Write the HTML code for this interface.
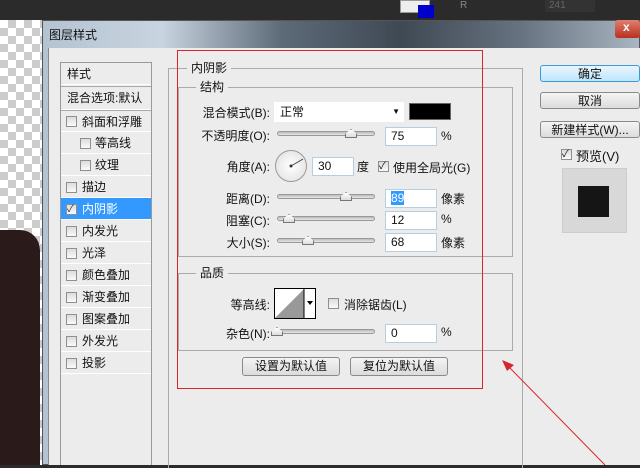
<!DOCTYPE html>
<html><head><meta charset="utf-8"><style>
*{margin:0;padding:0;box-sizing:border-box}
body{width:640px;height:465px;overflow:hidden;position:relative;background:#2b2b2b;font-family:"Liberation Sans","Noto Sans CJK SC",sans-serif;font-size:12px;color:#111}
.a{position:absolute}
.chk{background-color:#fff;background-image:linear-gradient(45deg,#ccc 25%,transparent 25%,transparent 75%,#ccc 75%),linear-gradient(45deg,#ccc 25%,transparent 25%,transparent 75%,#ccc 75%);background-size:16px 16px;background-position:0 0,8px 8px}
.cb{position:absolute;width:11px;height:11px;border:1px solid #8e8f8f;background:linear-gradient(#dcdcdc,#fafafa)}
.row{position:absolute;left:61px;width:90px;height:22px;border-bottom:1px solid #fff;line-height:22px}
.sl{position:absolute;height:5px;border:1px solid #999;border-radius:3px;background:linear-gradient(#bbb,#e6e6e6)}
.th{position:absolute;width:12px;height:9px;background:linear-gradient(#fff,#ddd);border:1px solid #777;clip-path:polygon(50% 0,100% 55%,100% 100%,0 100%,0 55%)}
.tb{position:absolute;width:52px;height:19px;background:#fff;border:1px solid #b5cfe0;line-height:17px;padding-left:5px}
.btn{position:absolute;border:1px solid #8a8a8a;border-radius:3px;background:linear-gradient(#f4f4f4,#dcdcdc);text-align:center;line-height:16px}
.lbl{position:absolute;text-align:right;width:100px}
</style></head><body>
<div class="a chk" style="left:0;top:20px;width:42px;height:445px"></div>
<div class="a" style="left:0;top:230px;width:40px;height:235px;background:#2a1a1a;border-radius:0 20px 0 0"></div>
<div class="a" style="left:400px;top:0;width:30px;height:13px;background:#eee;border:1px solid #999"></div>
<div class="a" style="left:418px;top:5px;width:16px;height:13px;background:#0000cc"></div>
<div class="a" style="left:460px;top:0;color:#888;font-size:10px">R</div>
<div class="a" style="left:545px;top:0;width:50px;height:12px;background:#333;color:#666;font-size:10px;padding-left:4px">241</div>
<div class="a" style="left:42px;top:20px;width:598px;height:445px;background:linear-gradient(90deg,#b4c3d2,#c8d4df 20%,#5d6a78 40%,#3f4954 60%,#66727f 80%,#a9b5c1);border:1px solid #555"></div>
<div class="a" style="left:49px;top:26px;font-size:12px">图层样式</div>
<div class="a" style="left:615px;top:20px;width:25px;height:18px;background:linear-gradient(#e08070,#b83020);border-radius:3px;color:#fff;font-weight:bold;padding-left:8px">x</div>
<div class="a" style="left:48px;top:48px;width:592px;height:417px;background:#ececec;border-left:1px solid #888"></div>
<div class="a" style="left:60px;top:62px;width:92px;height:403px;border:1px solid #999;border-bottom:none"></div>
<div class="row" style="top:63px;padding-left:6px">样式</div>
<div class="row" style="top:86px;padding-left:6px;border-top:1px solid #aaa;height:24px">混合选项:默认</div>
<div class="row" style="top:110px;padding-left:21px;border-top:1px solid #aaa">斜面和浮雕</div><div class="cb" style="left:66px;top:116px"></div>
<div class="row" style="top:132px;padding-left:34px">等高线</div><div class="cb" style="left:80px;top:138px"></div>
<div class="row" style="top:154px;padding-left:34px">纹理</div><div class="cb" style="left:80px;top:160px"></div>
<div class="row" style="top:176px;padding-left:21px">描边</div><div class="cb" style="left:66px;top:182px"></div>
<div class="row" style="top:198px;padding-left:21px;background:#3399ff;color:#fff">内阴影</div><div class="cb" style="left:66px;top:204px;font-size:10px;line-height:9px;color:#234">✓</div>
<div class="row" style="top:220px;padding-left:21px">内发光</div><div class="cb" style="left:66px;top:226px"></div>
<div class="row" style="top:242px;padding-left:21px">光泽</div><div class="cb" style="left:66px;top:248px"></div>
<div class="row" style="top:264px;padding-left:21px">颜色叠加</div><div class="cb" style="left:66px;top:270px"></div>
<div class="row" style="top:286px;padding-left:21px">渐变叠加</div><div class="cb" style="left:66px;top:292px"></div>
<div class="row" style="top:308px;padding-left:21px">图案叠加</div><div class="cb" style="left:66px;top:314px"></div>
<div class="row" style="top:330px;padding-left:21px">外发光</div><div class="cb" style="left:66px;top:336px"></div>
<div class="row" style="top:352px;padding-left:21px">投影</div><div class="cb" style="left:66px;top:358px"></div>
<div class="a" style="left:168px;top:68px;width:355px;height:400px;border:1px solid #aaa;border-bottom:none"></div>
<div class="a" style="left:187px;top:59px;background:#ececec;padding:0 4px">内阴影</div>
<div class="a" style="left:178px;top:87px;width:335px;height:170px;border:1px solid #aaa"></div>
<div class="a" style="left:196px;top:78px;background:#ececec;padding:0 4px">结构</div>
<div class="a" style="left:178px;top:273px;width:335px;height:78px;border:1px solid #aaa"></div>
<div class="a" style="left:196px;top:264px;background:#ececec;padding:0 4px">品质</div>
<div class="lbl" style="left:170px;top:104px">混合模式(B):</div>
<div class="a" style="left:274px;top:102px;width:130px;height:20px;background:#fff;padding-left:6px;line-height:20px">正常<span style="position:absolute;right:4px;font-size:8px">▼</span></div>
<div class="a" style="left:409px;top:103px;width:42px;height:17px;background:#000;border:1px solid #666"></div>
<div class="lbl" style="left:170px;top:127px">不透明度(O):</div>
<div class="sl" style="left:277px;top:131px;width:98px"></div><div class="th" style="left:345px;top:129px"></div>
<div class="tb" style="left:385px;top:127px">75</div><div class="a" style="left:441px;top:129px">%</div>
<div class="lbl" style="left:170px;top:158px">角度(A):</div>
<div class="a" style="left:275px;top:150px;width:32px;height:32px;border:1px solid #999;border-radius:50%;background:radial-gradient(#fff,#ddd)"></div>
<svg class="a" style="left:275px;top:150px" width="32" height="32"><line x1="16" y1="16" x2="28" y2="9" stroke="#444"/><circle cx="16" cy="16" r="1.5" fill="#333"/></svg>
<div class="tb" style="left:312px;top:157px;width:42px">30</div><div class="a" style="left:357px;top:158px">度</div>
<div class="cb" style="left:378px;top:161px;font-size:10px;line-height:9px">✓</div><div class="a" style="left:393px;top:159px">使用全局光(G)</div>
<div class="lbl" style="left:170px;top:190px">距离(D):</div>
<div class="sl" style="left:277px;top:194px;width:98px"></div><div class="th" style="left:340px;top:192px"></div>
<div class="tb" style="left:385px;top:189px"><span style="background:#3399ff;color:#fff">89</span></div><div class="a" style="left:441px;top:190px">像素</div>
<div class="lbl" style="left:170px;top:212px">阻塞(C):</div>
<div class="sl" style="left:277px;top:216px;width:98px"></div><div class="th" style="left:283px;top:214px"></div>
<div class="tb" style="left:385px;top:211px">12</div><div class="a" style="left:441px;top:212px">%</div>
<div class="lbl" style="left:170px;top:234px">大小(S):</div>
<div class="sl" style="left:277px;top:238px;width:98px"></div><div class="th" style="left:302px;top:236px"></div>
<div class="tb" style="left:385px;top:233px">68</div><div class="a" style="left:441px;top:234px">像素</div>
<div class="lbl" style="left:170px;top:296px">等高线:</div>
<svg class="a" style="left:274px;top:288px" width="42" height="31"><rect x="0.5" y="0.5" width="41" height="30" fill="#fff" stroke="#000"/><polygon points="1,30 30,1 30,30" fill="#999"/><line x1="30" y1="0" x2="30" y2="31" stroke="#000"/><polygon points="33,13 39,13 36,17" fill="#000"/></svg>
<div class="cb" style="left:328px;top:298px"></div><div class="a" style="left:344px;top:296px">消除锯齿(L)</div>
<div class="lbl" style="left:170px;top:325px">杂色(N):</div>
<div class="sl" style="left:277px;top:329px;width:98px"></div><div class="th" style="left:271px;top:327px"></div>
<div class="tb" style="left:385px;top:324px">0</div><div class="a" style="left:441px;top:325px">%</div>
<div class="btn" style="left:242px;top:357px;width:98px;height:19px">设置为默认值</div>
<div class="btn" style="left:350px;top:357px;width:98px;height:19px">复位为默认值</div>
<div class="btn" style="left:540px;top:65px;width:100px;height:17px;border-color:#3c9bd6;background:linear-gradient(#eaf6fd,#bee6fd)">确定</div>
<div class="btn" style="left:540px;top:92px;width:100px;height:17px">取消</div>
<div class="btn" style="left:540px;top:121px;width:100px;height:17px">新建样式(W)...</div>
<div class="cb" style="left:561px;top:149px;font-size:10px;line-height:9px">✓</div><div class="a" style="left:576px;top:146px;font-size:13px">预览(V)</div>
<div class="a" style="left:562px;top:168px;width:65px;height:65px;background:#d8d8d8;border:1px solid #ccc"></div>
<div class="a" style="left:578px;top:186px;width:31px;height:31px;background:#151515"></div>
<div class="a" style="left:177px;top:50px;width:306px;height:339px;border:1px solid #d8262c"></div>
<svg class="a" style="left:0;top:0" width="640" height="465"><line x1="605" y1="465" x2="508" y2="366" stroke="#d8262c" stroke-width="1"/><polygon points="502,360 514,365 507,371" fill="#d8262c"/></svg>
</body></html>
